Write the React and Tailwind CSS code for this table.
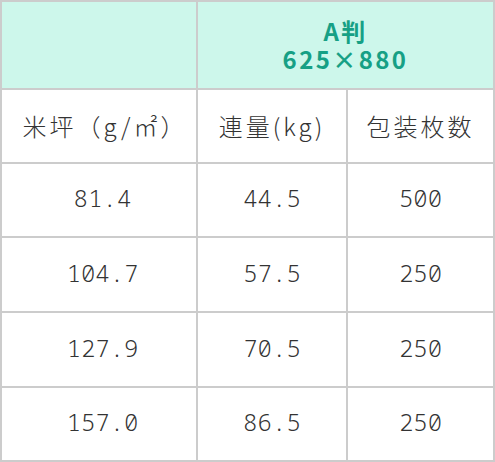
export default function App() {
  const rows = [
    ["81.4", "44.5", "500"],
    ["104.7", "57.5", "250"],
    ["127.9", "70.5", "250"],
    ["157.0", "86.5", "250"],
  ];
  const pads = ["pl-[7px]", "", ""];
  return (
    <div className="w-[495px] h-[462px] bg-[#cccccc] p-[2px] grid grid-cols-[194px_148px_145px] grid-rows-[86px_72px_72px_73px_73px_72px] gap-[2px] text-[#333333] text-[24px] font-light font-['Noto_Sans_CJK_JP',sans-serif]">
      <div className="bg-[#cdf7eb]"></div>
      <div className="col-span-2 bg-[#cdf7eb] flex flex-col items-center justify-center text-[#16a085] font-bold leading-[28px] tracking-[0.1em]">
        <div>A判</div>
        <div>625×880</div>
      </div>
      <div className="bg-white flex items-center justify-center tracking-[3px] pl-[12px]">米坪（g/㎡）</div>
      <div className="bg-white flex items-center justify-center tracking-[3px]">連量(kg)</div>
      <div className="bg-white flex items-center justify-center tracking-[3px]">包装枚数</div>
      {rows.map((r, i) =>
        r.map((c, j) => (
          <div
            key={`${i}-${j}`}
            className={`bg-white flex items-center justify-center pb-1 font-['Noto_Sans_Mono',monospace] ${pads[j]}`}
          >
            {c}
          </div>
        ))
      )}
    </div>
  );
}
